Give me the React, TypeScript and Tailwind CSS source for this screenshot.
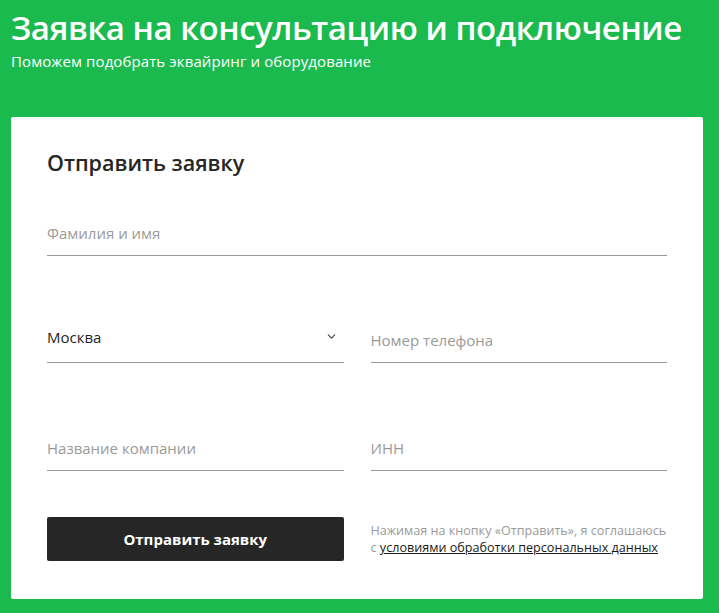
import { ChevronDown } from "lucide-react";

function Field({ label, className = "" }: { label: string; className?: string }) {
  return (
    <label className={`block border-b border-[#9a9a9a] pb-[10px] ${className}`}>
      <input
        placeholder={label}
        className="w-full bg-transparent text-[15px] leading-[20px] text-[#262626] placeholder:text-[#9a9a9a] outline-none"
      />
    </label>
  );
}

export default function App() {
  return (
    <div
      className="min-h-[613px] bg-[#1bba4f] px-[11px] pt-[8px] pb-[16px]"
      style={{ fontFamily: '"Open Sans", "Noto Sans", sans-serif' }}
    >
      <h1 className="text-[33px] leading-[40px] font-semibold text-white tracking-[-0.45px]">
        Заявка на консультацию и подключение
      </h1>
      <p className="mt-[3px] text-[15px] leading-[20px] text-white tracking-[0.1px]">
        Поможем подобрать эквайринг и оборудование
      </p>

      <div className="mt-[46px] w-[692px] rounded-[2px] bg-white px-[36px] pt-[32px] pb-[38px]">
        <h2 className="text-[21.5px] leading-[28px] font-semibold text-[#262626]">Отправить заявку</h2>

        <Field label="Фамилия и имя" className="mt-[44px]" />

        <div className="mt-[69px] grid grid-cols-2 gap-x-[27px]">
          <div className="flex items-center justify-between border-b border-[#9a9a9a] pb-[14px]">
            <span className="text-[15px] leading-[20px] text-[#1f1f1f]">Москва</span>
            <ChevronDown className="mr-[6px] h-[13px] w-[13px] text-[#444]" strokeWidth={2} />
          </div>
          <div className="pt-[3px]">
            <Field label="Номер телефона" />
          </div>
        </div>

        <div className="mt-[73px] grid grid-cols-2 gap-x-[27px]">
          <Field label="Название компании" />
          <Field label="ИНН" />
        </div>

        <div className="mt-[46px] grid grid-cols-2 gap-x-[27px] items-center">
          <button className="h-[44px] rounded-[2px] bg-[#262626] text-[15px] font-bold text-white">
            Отправить заявку
          </button>
          <p className="text-[12.6px] leading-[17px] text-[#9a9a9a]">
            Нажимая на кнопку «Отправить», я соглашаюсь
            <br />с{" "}
            <a href="#" className="text-[#1a1a1a] underline">
              условиями обработки персональных данных
            </a>
          </p>
        </div>
      </div>
    </div>
  );
}
